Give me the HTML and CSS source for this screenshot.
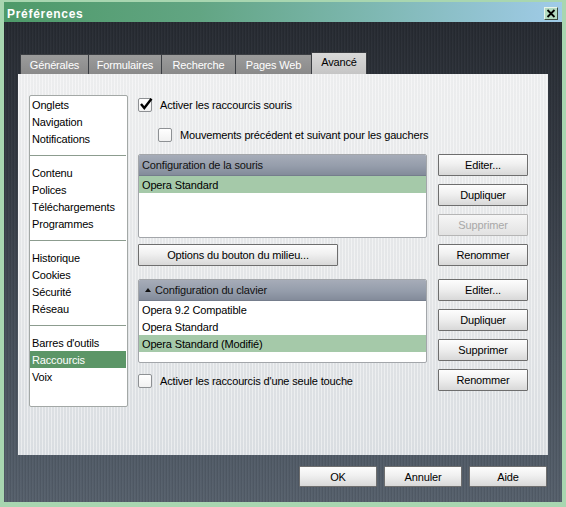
FILE: index.html
```html
<!DOCTYPE html>
<html lang="fr">
<head>
<meta charset="utf-8">
<title>Préférences</title>
<link rel="stylesheet" href="styles.css">
</head>
<body>
<div class="window">
  <div class="titlebar">
    <span class="title">Préférences</span>
    <span class="close"><svg width="12" height="11" viewBox="0 0 12 11"><path d="M2.5 2 L9.5 9 M9.5 2 L2.5 9" stroke="#000" stroke-width="1.8" fill="none"/></svg></span>
  </div>
  <div class="client">
    <div class="tabs">
      <div class="tab w1">Générales</div>
      <div class="tab w2">Formulaires</div>
      <div class="tab w3">Recherche</div>
      <div class="tab w4">Pages Web</div>
      <div class="tab w5 active">Avancé</div>
    </div>
    <div class="panel">
      <ul class="sidebar">
        <li>Onglets</li>
        <li>Navigation</li>
        <li>Notifications</li>
        <li class="sep"></li>
        <li>Contenu</li>
        <li>Polices</li>
        <li>Téléchargements</li>
        <li>Programmes</li>
        <li class="sep"></li>
        <li>Historique</li>
        <li>Cookies</li>
        <li>Sécurité</li>
        <li>Réseau</li>
        <li class="sep"></li>
        <li>Barres d'outils</li>
        <li class="selected">Raccourcis</li>
        <li>Voix</li>
      </ul>
      <div class="main">
        <div class="check">
          <span class="box"><svg width="16" height="16" viewBox="0 0 16 16"><path d="M3 7 L6.3 11 L13.5 1.8" stroke="#000" stroke-width="2.4" fill="none"/></svg></span>
          <span>Activer les raccourcis souris</span>
        </div>
        <div class="check indent">
          <span class="box"></span>
          <span>Mouvements précédent et suivant pour les gauchers</span>
        </div>
        <div class="section mouse">
          <div class="left">
            <div class="list">
              <div class="list-head">Configuration de la souris</div>
              <div class="row selected">Opera Standard</div>
            </div>
            <button class="btn wide">Options du bouton du milieu...</button>
          </div>
          <div class="btncol">
            <button class="btn">Editer...</button>
            <button class="btn">Dupliquer</button>
            <button class="btn disabled">Supprimer</button>
            <button class="btn">Renommer</button>
          </div>
        </div>
        <div class="section keys">
          <div class="left">
            <div class="list">
              <div class="list-head"><span class="arrow"></span>Configuration du clavier</div>
              <div class="row">Opera 9.2 Compatible</div>
              <div class="row">Opera Standard</div>
              <div class="row selected">Opera Standard (Modifié)</div>
            </div>
            <div class="check single">
              <span class="box"></span>
              <span>Activer les raccourcis d'une seule touche</span>
            </div>
          </div>
          <div class="btncol">
            <button class="btn">Editer...</button>
            <button class="btn">Dupliquer</button>
            <button class="btn">Supprimer</button>
            <button class="btn">Renommer</button>
          </div>
        </div>
      </div>
    </div>
    <div class="footer">
      <button class="btn foot">OK</button>
      <button class="btn foot">Annuler</button>
      <button class="btn foot">Aide</button>
    </div>
  </div>
</div>
</body>
</html>
```
FILE: styles.css
```css
* { box-sizing: border-box; }
html, body { margin: 0; padding: 0; }
body {
  width: 566px;
  height: 507px;
  overflow: hidden;
  font-family: "Liberation Sans", Arial, sans-serif;
  font-size: 11px;
  letter-spacing: -0.15px;
  color: #000;
  background: #56616c;
}
.window {
  width: 566px;
  height: 507px;
  display: flex;
  flex-direction: column;
  border-style: solid;
  border-color: #a8d6b0;
  border-width: 2px 4px 5px 4px;
}
.titlebar {
  height: 20px;
  flex: none;
  display: flex;
  justify-content: space-between;
  align-items: center;
  padding: 0 4px 0 3px;
  background: linear-gradient(90deg, #4e9a69 0%, #62a583 35%, #7db7b0 65%, #a0cbe8 100%);
}
.title {
  color: #fff;
  font-weight: bold;
  font-size: 12px;
  letter-spacing: 0.7px;
  padding-top: 3px;
}
.close {
  align-self: flex-end;
  margin-bottom: 2px;
  width: 14px;
  height: 13px;
  display: flex;
  align-items: center;
  justify-content: center;
  background: #b3dac0;
  border: 1px solid;
  border-color: #e8f5ea #3c4a40 #3c4a40 #e8f5ea;
}
.client {
  flex: 1;
  display: flex;
  flex-direction: column;
  padding: 30px 14px 0 14px;
  background:
    repeating-linear-gradient(90deg, rgba(0,0,0,0.07) 0 1px, rgba(255,255,255,0.025) 1px 2px, transparent 2px 3px),
    linear-gradient(180deg, #272b32 0%, #343a43 30%, #48515c 70%, #56606c 100%);
}
.tabs {
  display: flex;
  align-items: flex-end;
  height: 22px;
  padding-left: 2px;
}
.tab {
  height: 20px;
  line-height: 20px;
  text-align: center;
  color: #fff;
  background: linear-gradient(180deg, #9b9b9b 0%, #8a8a8a 100%);
  border: 1px solid #3a3d42;
  border-bottom: none;
  border-right: none;
}
.w1 { width: 68px; }
.w2 { width: 73px; }
.w3 { width: 74px; }
.w4 { width: 76px; }
.w5 { width: 56px; }
.tab.active {
  height: 22px;
  line-height: 18px;
  color: #000;
  background: linear-gradient(180deg, #d9d9d9 0%, #c5c5c5 100%);
  border-right: 1px solid #3a3d42;
}
.panel {
  height: 381px;
  display: flex;
  padding: 21px 20px 0 11px;
  background:
    repeating-linear-gradient(90deg, rgba(255,255,255,0.45) 0 1px, transparent 1px 3px),
    linear-gradient(180deg, #ecedee 0%, #e3e5e7 60%, #d9dde1 100%);
}
.sidebar {
  list-style: none;
  margin: 0;
  padding: 0 1px 0 0;
  width: 99px;
  height: 312px;
  flex: none;
  background: #fff;
  border: 1px solid #a3a8a6;
  border-radius: 2px;
}
.sidebar li {
  height: 17px;
  line-height: 18px;
  padding-left: 2px;
  white-space: nowrap;
}
.sidebar li.sep {
  height: 1px;
  margin: 8px 0;
  background: #8c9c8f;
}
.sidebar li.selected {
  background: #5c9667;
  color: #fff;
}
.main {
  margin-left: 10px;
  width: 390px;
  padding-top: 3px;
  display: flex;
  flex-direction: column;
}
.check {
  display: flex;
  align-items: center;
  height: 14px;
  gap: 8px;
  white-space: nowrap;
}
.check.indent {
  margin-top: 16px;
  margin-left: 20px;
}
.check.single {
  margin-top: 11px;
}
.box {
  position: relative;
  width: 14px;
  height: 14px;
  flex: none;
  border: 1px solid #8e9194;
  border-radius: 2px;
  background: linear-gradient(180deg, #ffffff 0%, #f1f1f1 100%);
}
.box svg {
  position: absolute;
  left: -1px;
  top: -2px;
}
.section {
  display: flex;
  gap: 11px;
}
.section.mouse { margin-top: 12px; }
.section.keys { margin-top: 13px; }
.left {
  width: 289px;
  display: flex;
  flex-direction: column;
}
.list {
  height: 84px;
  background: #fff;
  border: 1px solid #a3a6aa;
  border-radius: 2px;
  overflow: hidden;
}
.list-head {
  height: 21px;
  line-height: 22px;
  padding-left: 3px;
  color: #111;
  display: flex;
  align-items: center;
  background: linear-gradient(180deg, #a6acb8 0%, #959dab 55%, #838b9a 100%);
  border-bottom: 1px solid #757d8c;
}
.arrow {
  width: 0;
  height: 0;
  border-left: 3px solid transparent;
  border-right: 3px solid transparent;
  border-bottom: 4px solid #111;
  margin: 0 4px 1px 3px;
}
.row {
  height: 17px;
  line-height: 18px;
  padding-left: 3px;
}
.row.selected { background: #a5c9a9; }
.btncol {
  width: 90px;
  display: flex;
  flex-direction: column;
  gap: 8px;
}
.btn {
  font-family: "Liberation Sans", Arial, sans-serif;
  font-size: 11px;
  letter-spacing: -0.15px;
  color: #000;
  height: 22px;
  padding: 0;
  border: 1px solid #6e6e6e;
  border-radius: 1px;
  background: linear-gradient(180deg, #fdfdfd 0%, #f0f0f0 45%, #d8d8d8 100%);
  text-align: center;
}
.btn.wide {
  width: 200px;
  margin-top: 6px;
}
.btn.disabled {
  color: #a8a8a8;
  border-color: #b5b5b5;
  background: linear-gradient(180deg, #f6f6f6 0%, #ececec 50%, #e2e2e2 100%);
}
.footer {
  display: flex;
  justify-content: flex-end;
  gap: 7px;
  margin-top: 11px;
  padding-right: 1px;
}
.btn.foot {
  width: 78px;
  height: 21px;
}
```
